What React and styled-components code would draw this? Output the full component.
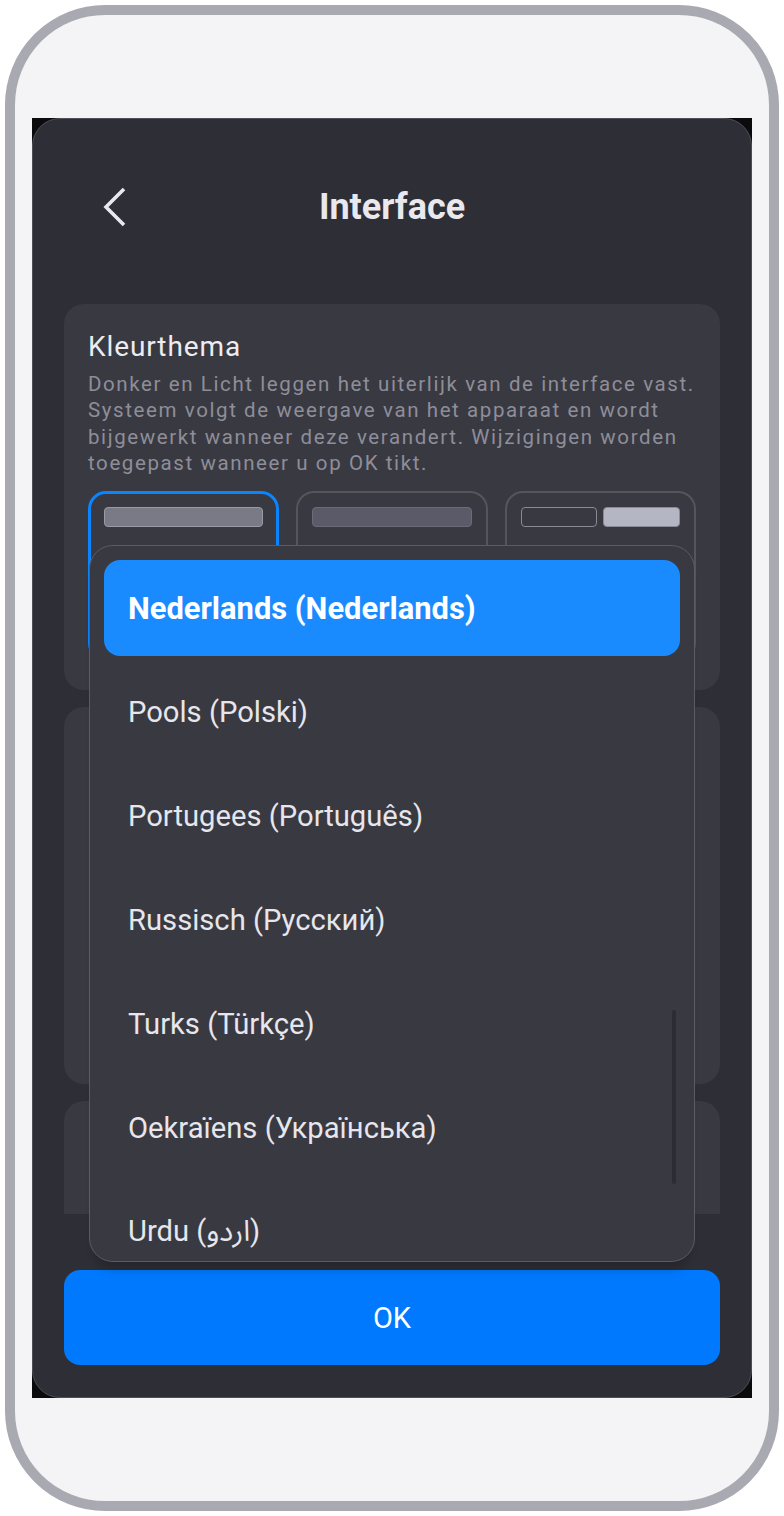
import React from "react";
import styled, { createGlobalStyle } from "styled-components";

const Global = createGlobalStyle`
  html, body { margin: 0; padding: 0; background: #ffffff; }
  body { font-family: Roboto, "Noto Sans", "Noto Sans Arabic", "DejaVu Sans", sans-serif; }
  * { box-sizing: border-box; }
`;

const Device = styled.div`
  margin: 5px;
  width: 774px;
  height: 1506px;
  border: 10px solid #a9a9b1;
  border-radius: 100px;
  background: #f4f4f6;
  padding: 103px 0 0 17px;
`;

const Screen = styled.div`
  width: 720px;
  height: 1280px;
  background: #0b0b0d;
`;

const Panel = styled.div`
  position: relative;
  width: 720px;
  height: 1280px;
  background: #2e2e36;
  border: 1px solid #4f4f5a;
  border-radius: 28px;
  display: flex;
  flex-direction: column;
  padding: 0 31px;
  overflow: hidden;
`;

const Header = styled.header`
  height: 175px;
  display: grid;
  grid-template-columns: 1fr auto 1fr;
  align-items: center;
  flex-shrink: 0;
`;

const BackButton = styled.button`
  justify-self: start;
  margin-left: 37px;
  width: 40px;
  height: 48px;
  padding: 0;
  border: none;
  background: transparent;
  display: flex;
  align-items: center;
  cursor: pointer;
`;

const Title = styled.h1`
  margin: 0;
  font-size: 36px;
  font-weight: 700;
  color: #e8e8ee;
`;

const ScrollArea = styled.div`
  margin-top: 10px;
  height: 910px;
  overflow: hidden;
  display: flex;
  flex-direction: column;
  gap: 17px;
  flex-shrink: 0;
`;

const Card = styled.section`
  flex-shrink: 0;
  background: #393942;
  border-radius: 20px;
  padding: 26px 24px 24px;
  height: ${(p) => p.$h}px;
`;

const CardTitle = styled.h2`
  margin: 0;
  font-size: 28px;
  font-weight: 400;
  line-height: 34px;
  color: #ececf1;
  letter-spacing: 0.9px;
`;

const CardText = styled.p`
  margin: 7px 0 0;
  font-size: 20.5px;
  line-height: 26.3px;
  color: #8e8e99;
  letter-spacing: 1.6px;
`;

const ThemeRow = styled.div`
  margin-top: 15px;
  display: grid;
  grid-template-columns: repeat(3, 1fr);
  gap: 17px;
`;

const ThemeOption = styled.div`
  height: 170px;
  border-radius: 18px;
  border: ${(p) => (p.$active ? "3px solid #0a84ff" : "2px solid #55555f")};
  padding: ${(p) => (p.$active ? "13px" : "14px")};
  display: flex;
  gap: 6px;
  align-items: flex-start;
`;

const Bar = styled.div`
  flex: 1;
  height: 20px;
  border-radius: 4px;
  background: ${(p) => p.$bg};
  border: 1.5px solid ${(p) => p.$border};
`;

const Footer = styled.div`
  padding-top: 56px;
`;

const OkButton = styled.button`
  width: 100%;
  height: 95px;
  border: none;
  border-radius: 16px;
  background: #0079fe;
  color: #ffffff;
  font-family: inherit;
  font-size: 29px;
  font-weight: 400;
  cursor: pointer;
`;

const Menu = styled.div`
  position: absolute;
  left: 56px;
  top: 426px;
  width: 606px;
  height: 717px;
  background: #393942;
  border: 1.5px solid #5b5b67;
  border-radius: 24px;
  box-shadow: 0 14px 10px -6px rgba(0, 0, 0, 0.18);
  padding: 14px 14px 0;
  overflow: hidden;
`;

const MenuList = styled.ul`
  list-style: none;
  margin: 0;
  padding: 0;
  display: flex;
  flex-direction: column;
  gap: 8px;
`;

const MenuItem = styled.li`
  height: 96px;
  flex-shrink: 0;
  display: flex;
  align-items: center;
  padding-left: 24px;
  border-radius: 16px;
  background: ${(p) => (p.$selected ? "#1a8bff" : "transparent")};
  color: ${(p) => (p.$selected ? "#ffffff" : "#e6e6ec")};
  font-size: ${(p) => (p.$selected ? "30.9px" : "29.2px")};
  font-weight: ${(p) => (p.$selected ? 700 : 400)};
`;

const ScrollThumb = styled.div`
  position: absolute;
  right: 18px;
  top: 464px;
  width: 4px;
  height: 174px;
  border-radius: 2px;
  background: #2c2c34;
`;

const languages = [
  "Nederlands (Nederlands)",
  "Pools (Polski)",
  "Portugees (Português)",
  "Russisch (Русский)",
  "Turks (Türkçe)",
  "Oekraïens (Українська)",
  "Urdu (اردو)",
];

export default function App() {
  return (
    <>
      <Global />
      <Device>
        <Screen>
          <Panel>
            <Header>
              <BackButton aria-label="Terug">
                <svg width="28" height="44" viewBox="0 0 28 44" fill="none">
                  <path
                    d="M23 4 L5 22 L23 40"
                    stroke="#e8e8ee"
                    strokeWidth="3.6"
                    strokeLinecap="butt"
                    strokeLinejoin="miter"
                  />
                </svg>
              </BackButton>
              <Title>Interface</Title>
              <div />
            </Header>
            <ScrollArea>
              <Card $h={386}>
                <CardTitle>Kleurthema</CardTitle>
                <CardText>
                  Donker en Licht leggen het uiterlijk van de interface vast.
                  Systeem volgt de weergave van het apparaat en wordt
                  bijgewerkt wanneer deze verandert. Wijzigingen worden
                  toegepast wanneer u op OK tikt.
                </CardText>
                <ThemeRow>
                  <ThemeOption $active>
                    <Bar $bg="#7a7a87" $border="#9a9aa6" />
                  </ThemeOption>
                  <ThemeOption>
                    <Bar $bg="#5a5a68" $border="#6a6a78" />
                  </ThemeOption>
                  <ThemeOption>
                    <Bar $bg="#393942" $border="#8a8a95" />
                    <Bar $bg="#b4b6c3" $border="#8a8a95" />
                  </ThemeOption>
                </ThemeRow>
              </Card>
              <Card $h={377} />
              <Card $h={377} />
            </ScrollArea>
            <Footer>
              <OkButton>OK</OkButton>
            </Footer>
            <Menu role="listbox">
              <MenuList>
                {languages.map((l, i) => (
                  <MenuItem key={l} $selected={i === 0}>
                    {l}
                  </MenuItem>
                ))}
              </MenuList>
              <ScrollThumb />
            </Menu>
          </Panel>
        </Screen>
      </Device>
    </>
  );
}
